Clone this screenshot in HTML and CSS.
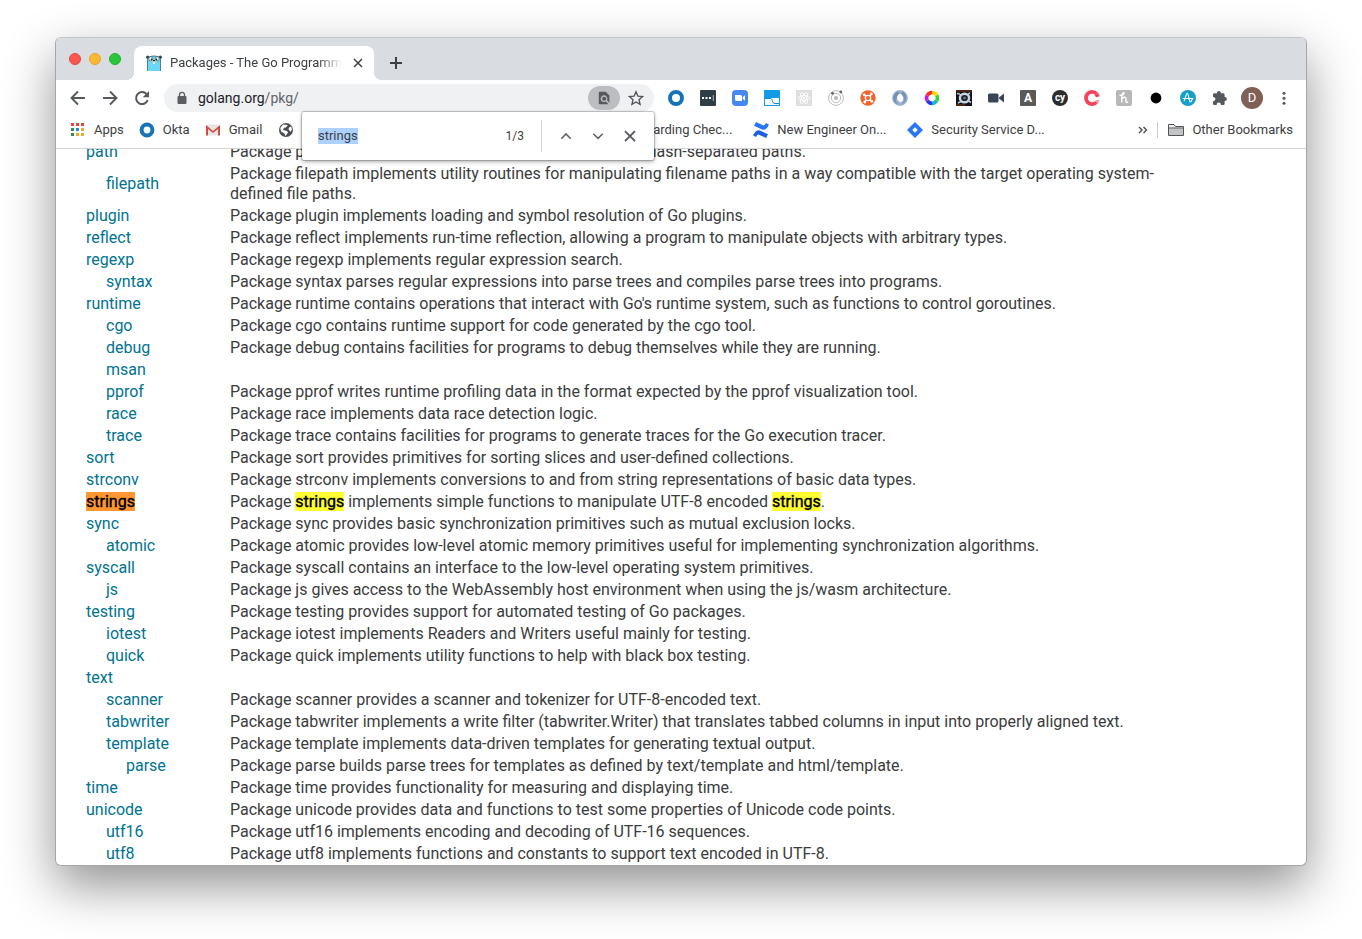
FILE: index.html
```html
<!DOCTYPE html>
<html lang="en">
<head>
<meta charset="utf-8">
<title>Packages - The Go Programming Language</title>
<link rel="stylesheet" href="styles.css">
</head>
<body>
<div class="window">
  <header class="tabstrip">
    <div class="lights">
      <button class="light light-close" aria-label="Close window"></button>
      <button class="light light-min" aria-label="Minimize window"></button>
      <button class="light light-max" aria-label="Zoom window"></button>
    </div>
    <div class="tab">
      <svg class="i16" viewBox="0 0 16 16"><circle cx="1.7" cy="2.2" r="1.6" fill="#27474f"/><circle cx="14.3" cy="2.2" r="1.6" fill="#27474f"/><path d="M1.5 16V4C2 0 14 0 14.500 4V16z" fill="#6ad7f7"/><path d="M1.500 16V4C2 0 14 0 14.500 4V16" fill="none" stroke="#23515f" stroke-width=".7"/><circle cx="4.800" cy="3.800" r="2" fill="#fff" stroke="#222" stroke-width=".5"/><circle cx="11.200" cy="3.800" r="2" fill="#fff" stroke="#222" stroke-width=".5"/><circle cx="5.500" cy="4.200" r=".8"/><circle cx="10.500" cy="4.200" r=".8"/><ellipse cx="8" cy="6.600" rx="2" ry="1.200" fill="#e9c9a0"/><ellipse cx="8" cy="5.600" rx="1.100" ry=".7"/><path d="M7.200 7.300h1.600v1.600H7.200z" fill="#fff"/></svg>
      <span class="tab-title">Packages - The Go Programming Language</span>
      <button class="icon-btn tab-close" aria-label="Close tab"><svg class="i16" viewBox="0 0 16 16"><path d="M4 4l8 8M12 4l-8 8" fill="none" stroke="#3c4043" stroke-width="1.500"/></svg></button>
    </div>
    <button class="icon-btn new-tab" aria-label="New tab"><svg class="i16" viewBox="0 0 16 16"><path d="M8 2v12M2 8h12" stroke="#3c4043" stroke-width="2"/></svg></button>
  </header>

  <nav class="toolbar">
    <div class="buttons">
      <button class="icon-btn" aria-label="Back"><svg class="i16" viewBox="0 0 16 16"><path d="M15 8H2M8 1.500L1.500 8 8 14.500" fill="none" stroke="#55585d" stroke-width="1.900"/></svg></button>
      <button class="icon-btn" aria-label="Forward"><svg class="i16" viewBox="0 0 16 16"><path d="M1 8h13M8 1.500L14.500 8 8 14.500" fill="none" stroke="#55585d" stroke-width="1.900"/></svg></button>
      <button class="icon-btn" aria-label="Reload"><svg class="i16" viewBox="0 0 16 16"><path d="M13.700 10.200A6 6 0 1 1 12.500 4" fill="none" stroke="#55585d" stroke-width="2"/><path d="M15 1v6.300H8.700z" fill="#55585d"/></svg></button>
    </div>
    <div class="omnibox">
      <svg class="i16 lock" viewBox="0 0 16 16"><rect x="3.500" y="6" width="9" height="8" rx="1" fill="#5a5d61"/><path d="M5.500 6.500V4.800a2.500 2.500 0 0 1 5 0v1.700" fill="none" stroke="#5a5d61" stroke-width="1.300"/></svg>
      <span class="url">golang.org<span class="url-path">/pkg/</span></span>
      <button class="icon-btn find-pill" aria-label="Find"><svg class="i16" viewBox="0 0 16 16"><path d="M3.600 1.800H9.600L13.400 5.400v7.300L11 10.300A3.400 3.400 0 1 0 9.800 11.600L12.600 14.300H3.900Q2.800 14.300 2.800 13.300V2.800Q2.800 1.800 3.600 1.800z" fill="#55585c"/><circle cx="8.200" cy="8.800" r="2" fill="#55585c"/></svg></button>
      <button class="icon-btn" aria-label="Bookmark"><svg class="i16" viewBox="0 0 16 16"><path d="M8 1.700l1.900 4.400 4.700.4-3.600 3.200 1.100 4.700L8 11.900l-4.100 2.500L5 9.700 1.400 6.500l4.700-.4z" fill="none" stroke="#505357" stroke-width="1.300"/></svg></button>
      <form class="findbar">
        <input class="find-input" type="text" value="strings" aria-label="Find in page">
        <span class="find-count">1/3</span>
        <span class="find-rule"></span>
        <button type="button" class="icon-btn" aria-label="Previous"><svg class="i16" viewBox="0 0 16 16"><path d="M3.300 10.700L8 6l4.700 4.700" fill="none" stroke="#5f6368" stroke-width="1.600"/></svg></button>
        <button type="button" class="icon-btn" aria-label="Next"><svg class="i16" viewBox="0 0 16 16"><path d="M3.300 5.700L8 10.400l4.700-4.700" fill="none" stroke="#5f6368" stroke-width="1.600"/></svg></button>
        <button type="button" class="icon-btn" aria-label="Close find bar"><svg class="i16" viewBox="0 0 16 16"><path d="M3 3.200l10 10M13 3.200l-10 10" fill="none" stroke="#55585d" stroke-width="1.900"/></svg></button>
      </form>
    </div>
    <div class="buttons">
      <button class="icon-btn" aria-label="Okta"><svg class="i16" viewBox="0 0 16 16"><circle cx="8" cy="8" r="6" fill="none" stroke="#1673b8" stroke-width="4"/></svg></button>
      <button class="icon-btn" aria-label="Password manager"><svg class="i16" viewBox="0 0 16 16"><rect width="16" height="16" rx="1" fill="#2f3d47"/><path d="M2 7h2v2H2zM5.500 7h2v2h-2zM9 7h2v2H9z" fill="#fff"/><path d="M12.800 5h1v6h-1z" fill="#aab1b5"/></svg></button>
      <button class="icon-btn" aria-label="Zoom"><svg class="i16" viewBox="0 0 16 16"><rect width="16" height="16" rx="4" fill="#4687f4"/><path d="M3 5h5.500q1.500 0 1.500 1.500V11H4.500Q3 11 3 9.500zM10.700 7.200L13 5.300v5.400l-2.300-1.900z" fill="#fff"/></svg></button>
      <button class="icon-btn" aria-label="Screenshots"><svg class="i16" viewBox="0 0 16 16"><path d="M0 0h16v16H0z" fill="#149be5"/><path d="M1 8h14v7H1z" fill="#f6fbfe"/><path d="M1 8.500h5.500C9 8.500 7.500 13.500 11 13.500h4" fill="none" stroke="#1688ca"/></svg></button>
      <button class="icon-btn" aria-label="React tools"><svg class="i16" viewBox="0 0 16 16"><rect width="16" height="16" fill="#dfdfdf"/><g fill="none" stroke="#fff" stroke-width=".9"><ellipse cx="8" cy="8" rx="6" ry="2.300"/><ellipse cx="8" cy="8" rx="6" ry="2.300" transform="rotate(60 8 8)"/><ellipse cx="8" cy="8" rx="6" ry="2.300" transform="rotate(120 8 8)"/></g><circle cx="8" cy="8" r="1" fill="#fff"/></svg></button>
      <button class="icon-btn" aria-label="Apollo tools"><svg class="i16" viewBox="0 0 16 16"><g fill="none" stroke="#b3b3b3" stroke-width=".9"><circle cx="8" cy="8" r="7.400"/><circle cx="8" cy="8" r="4.700"/></g><circle cx="8" cy="8" r="2.100" fill="#b8b8b8"/><circle cx="4.500" cy="3.300" r="1.400" fill="#666"/><circle cx="12.800" cy="2" r="1.400" fill="#666"/></svg></button>
      <button class="icon-btn" aria-label="Hub"><svg class="i16" viewBox="0 0 16 16"><circle cx="8" cy="8" r="7.700" fill="#f0642c"/><g fill="none" stroke="#fff" stroke-width="1.200"><circle cx="8" cy="8" r="2.700"/><path d="M4.300 4.500L6 6M11.500 4l-1.500 2M4.700 12L6 10M11.800 11.500L10 10"/></g><g fill="#fff"><circle cx="4.200" cy="4.800" r="1.400"/><circle cx="11.300" cy="4" r="1.400"/><circle cx="4.800" cy="12" r="1.400"/><circle cx="11.900" cy="11.300" r="1.400"/></g></svg></button>
      <button class="icon-btn" aria-label="JSON viewer"><svg class="i16" viewBox="0 0 16 16"><circle cx="8" cy="8" r="5.400" fill="none" stroke="#9db3d0" stroke-width="5"/><path d="M10.300 1.300C15 3 17 10.500 9.500 14.500c4.200-4.500 3.200-8-.5-10.500" fill="#7593ba"/><path d="M6 1.300C-.5 4-.5 13 6.500 14.800 2.500 10 4 6.500 8.500 3.800" fill="#7593ba"/><ellipse cx="8.300" cy="8" rx="2.500" ry="4.200" fill="#fff" transform="rotate(-10 8 8)"/></svg></button>
      <button class="icon-btn" aria-label="Color picker"><svg class="i16" viewBox="0 0 16 16"><g fill="none" stroke-width="3.600"><path d="M8 2.600A5.400 5.400 0 0 1 12.700 5.300" stroke="#ffd400"/><path d="M12.700 5.300A5.400 5.400 0 0 1 12.700 10.700" stroke="#35d32e"/><path d="M12.700 10.700A5.400 5.400 0 0 1 8 13.400" stroke="#16b9c9"/><path d="M8 13.400A5.400 5.400 0 0 1 3.300 10.700" stroke="#2738f0"/><path d="M3.300 10.700A5.400 5.400 0 0 1 3.300 5.300" stroke="#c51be2"/><path d="M3.300 5.300A5.400 5.400 0 0 1 8 2.600" stroke="#ff2c1f"/></g></svg></button>
      <button class="icon-btn" aria-label="Camera"><svg class="i16" viewBox="0 0 16 16"><path d="M0 0h16v16H0z" fill="#11131a"/><path d="M0 0h16v2H0zM0 14h9v2H0z" fill="#4c2516"/><path d="M1 3.500l3 .5M2 13l3-1.500M14 3l-2 1M15 12.500L12.500 11" stroke="#b8c5d3" stroke-width="1.500"/><ellipse cx="8.500" cy="8" rx="4.600" ry="4.300" fill="#1d2530" stroke="#c9d5e0" stroke-width="2.400"/><circle cx="8.500" cy="8" r="1.300" fill="#6d7f92"/></svg></button>
      <button class="icon-btn" aria-label="Video"><svg class="i16" viewBox="0 0 16 16"><rect y="3.500" width="10.500" height="9" rx="1.500" fill="#394456"/><path d="M11 7.500l5-4v9l-5-4z" fill="#394456"/></svg></button>
      <button class="icon-btn" aria-label="Accessibility"><span class="badge badge-a">A</span></button>
      <button class="icon-btn" aria-label="Cypress"><span class="badge badge-cy">cy</span></button>
      <button class="icon-btn" aria-label="Clockwise"><svg class="i16" viewBox="0 0 16 16"><path d="M12.500 3.800A6.100 6.100 0 1 0 12.500 12.200" fill="none" stroke="#f4425a" stroke-width="3.800"/><path d="M10.500 5.500L14 2.500l1.800 3.800-3.500 1z" fill="#f4425a"/><path d="M10.500 11.200l3-1.500h2l-1.500 3.500z" fill="#f7909f"/></svg></button>
      <button class="icon-btn" aria-label="Honey"><svg class="i16" viewBox="0 0 16 16"><rect width="16" height="16" rx="2" fill="#b8b8b8"/><path d="M3.500 5.200c3 0 5-1 4.600-2.100C7.500 1.900 5.800 4 5.800 7v5.500M5.800 9c1-2 4.200-2.600 4.200-.3v2.800c0 1.300 1.300 1.200 2 .3" fill="none" stroke="#fff" stroke-width="1.400"/></svg></button>
      <button class="icon-btn" aria-label="Recorder"><svg class="i16" viewBox="0 0 16 16"><circle cx="8" cy="8" r="5.400"/></svg></button>
      <button class="icon-btn" aria-label="Amplitude"><svg class="i16" viewBox="0 0 16 16"><circle cx="8" cy="8" r="8" fill="#159fc9"/><path d="M2.500 8.500h10.800M4 11C5.500 9 6 3.300 7.300 3.300S9 12 10.400 12s1.300-3 2.400-3.600" fill="none" stroke="#fff" stroke-width="1.100"/></svg></button>
      <button class="icon-btn" aria-label="Extensions"><svg class="i16" viewBox="0 0 16 16"><path d="M1 4.500q0-1.300 1.300-1.300H5C4.500.3 9.200.3 8.800 3.200h2.500q1.300 0 1.300 1.300V7c3-.3 3 4.300 0 4v2.700q0 1.300-1.300 1.300H9c0-3.300-4.400-3.300-4.400 0H2.300Q1 15 1 13.700v-2.500c3.200 0 3.200-4.200 0-4.200z" fill="#55585d"/></svg></button>
      <button class="icon-btn" aria-label="Profile"><span class="avatar">D</span></button>
      <button class="icon-btn" aria-label="Menu"><svg class="i16" viewBox="0 0 16 16"><g fill="#55585d"><circle cx="8" cy="3.200" r="1.500"/><circle cx="8" cy="8.200" r="1.500"/><circle cx="8" cy="13.200" r="1.500"/></g></svg></button>
    </div>
  </nav>

  <nav class="bookmarks">
    <a class="bookmark" href="#"><svg class="i16" viewBox="0 0 16 16"><path d="M1 1h3v3H1zM6 1h3v3H6zM11 1h3v3h-3z" fill="#e9453a"/><path d="M1 6h3v3H1zM1 11h3v3H1z" fill="#2f9150"/><path d="M6 6h3v3H6z" fill="#3080ee"/><path d="M11 6h3v3h-3zM6 11h3v3H6zM11 11h3v3h-3z" fill="#f2a62a"/></svg>Apps</a>
    <a class="bookmark" href="#"><svg class="i16" viewBox="0 0 16 16"><circle cx="8" cy="8" r="5.400" fill="none" stroke="#1673b8" stroke-width="4"/></svg>Okta</a>
    <a class="bookmark" href="#"><svg class="i16" viewBox="0 0 16 16"><path d="M2 2.500h12v11H2z" fill="#e6e6e6"/><path d="M1 3l7 6 7-6v10.500h-2V7L8 11 3 7v6.500H1z" fill="#d54b3d"/></svg>Gmail</a>
    <a class="bookmark bookmark-covered" href="#" aria-label="Website"><svg class="i16" viewBox="0 0 16 16"><circle cx="9" cy="8" r="7" fill="#4b4e53"/><path d="M6 2.500l4.800.5L9 5.500l-2 .2L6 8l4 1 1 1.500L8.500 14l-1-2.500L4 9.500 3.300 6zM11.500 6l2.700-1.700.8 3.200-1.500 2.200L12 8.200z" fill="#fff"/></svg></a>
    <a class="bookmark" href="#"><span class="i16"></span><span class="clip clip-end">Onboarding Chec...</span></a>
    <a class="bookmark" href="#"><svg class="i16" viewBox="0 0 16 16"><path d="M.5 12.500Q3.500 7 7 8.500l8 3.800-2 3.700-7-3.300q-1.500-.7-3 2.300L0 13.300z" fill="#1d61dc"/><path d="M15.500 3.500Q12.500 9 9 7.500L1 3.700 3 0l7 3.300q1.500.7 3-2.300L16 2.700z" fill="#2874f6"/></svg><span class="clip">New Engineer On...</span></a>
    <a class="bookmark" href="#"><svg class="i16" viewBox="0 0 16 16"><path d="M8 0l8 8-8 8-8-8z" fill="#2876f7"/><path d="M8 5.300L10.700 8 8 10.700 5.300 8z" fill="#fff"/></svg><span class="clip">Security Service D...</span></a>
    <div class="bookmarks-end">
      <button class="more" aria-label="More bookmarks"><svg class="i16" viewBox="0 0 16 16"><path d="M4 5l3 3-3 3M8.500 5l3 3-3 3" fill="none" stroke="#4b4e53" stroke-width="1.400"/></svg></button>
      <span class="bookmarks-rule"></span>
      <a class="bookmark" href="#"><svg class="i16" viewBox="0 0 16 16"><path d="M.5 13.500V2.500H6L7.500 4.500h8v9z" fill="#eee" stroke="#505357"/><path d="M1 6.500h14V13H1z" fill="#c4c4c4"/><path d="M1 6h14.500" stroke="#505357"/></svg>Other Bookmarks</a>
    </div>
  </nav>

  <main class="page">
    <table class="packages">
      <tbody>
      <tr><td><a href="#">path</a></td><td>Package path implements utility routines for manipulating slash-separated paths.</td></tr>
      <tr><td class="sub"><a href="#">filepath</a></td><td>Package filepath implements utility routines for manipulating filename paths in a way compatible with the target operating system-defined file paths.</td></tr>
      <tr><td><a href="#">plugin</a></td><td>Package plugin implements loading and symbol resolution of Go plugins.</td></tr>
      <tr><td><a href="#">reflect</a></td><td>Package reflect implements run-time reflection, allowing a program to manipulate objects with arbitrary types.</td></tr>
      <tr><td><a href="#">regexp</a></td><td>Package regexp implements regular expression search.</td></tr>
      <tr><td class="sub"><a href="#">syntax</a></td><td>Package syntax parses regular expressions into parse trees and compiles parse trees into programs.</td></tr>
      <tr><td><a href="#">runtime</a></td><td>Package runtime contains operations that interact with Go's runtime system, such as functions to control goroutines.</td></tr>
      <tr><td class="sub"><a href="#">cgo</a></td><td>Package cgo contains runtime support for code generated by the cgo tool.</td></tr>
      <tr><td class="sub"><a href="#">debug</a></td><td>Package debug contains facilities for programs to debug themselves while they are running.</td></tr>
      <tr><td class="sub"><a href="#">msan</a></td><td></td></tr>
      <tr><td class="sub"><a href="#">pprof</a></td><td>Package pprof writes runtime profiling data in the format expected by the pprof visualization tool.</td></tr>
      <tr><td class="sub"><a href="#">race</a></td><td>Package race implements data race detection logic.</td></tr>
      <tr><td class="sub"><a href="#">trace</a></td><td>Package trace contains facilities for programs to generate traces for the Go execution tracer.</td></tr>
      <tr><td><a href="#">sort</a></td><td>Package sort provides primitives for sorting slices and user-defined collections.</td></tr>
      <tr><td><a href="#">strconv</a></td><td>Package strconv implements conversions to and from string representations of basic data types.</td></tr>
      <tr><td><a href="#"><mark class="current">strings</mark></a></td><td>Package <mark>strings</mark> implements simple functions to manipulate UTF-8 encoded <mark>strings</mark>.</td></tr>
      <tr><td><a href="#">sync</a></td><td>Package sync provides basic synchronization primitives such as mutual exclusion locks.</td></tr>
      <tr><td class="sub"><a href="#">atomic</a></td><td>Package atomic provides low-level atomic memory primitives useful for implementing synchronization algorithms.</td></tr>
      <tr><td><a href="#">syscall</a></td><td>Package syscall contains an interface to the low-level operating system primitives.</td></tr>
      <tr><td class="sub"><a href="#">js</a></td><td>Package js gives access to the WebAssembly host environment when using the js/wasm architecture.</td></tr>
      <tr><td><a href="#">testing</a></td><td>Package testing provides support for automated testing of Go packages.</td></tr>
      <tr><td class="sub"><a href="#">iotest</a></td><td>Package iotest implements Readers and Writers useful mainly for testing.</td></tr>
      <tr><td class="sub"><a href="#">quick</a></td><td>Package quick implements utility functions to help with black box testing.</td></tr>
      <tr><td><a href="#">text</a></td><td></td></tr>
      <tr><td class="sub"><a href="#">scanner</a></td><td>Package scanner provides a scanner and tokenizer for UTF-8-encoded text.</td></tr>
      <tr><td class="sub"><a href="#">tabwriter</a></td><td>Package tabwriter implements a write filter (tabwriter.Writer) that translates tabbed columns in input into properly aligned text.</td></tr>
      <tr><td class="sub"><a href="#">template</a></td><td>Package template implements data-driven templates for generating textual output.</td></tr>
      <tr><td class="subsub"><a href="#">parse</a></td><td>Package parse builds parse trees for templates as defined by text/template and html/template.</td></tr>
      <tr><td><a href="#">time</a></td><td>Package time provides functionality for measuring and displaying time.</td></tr>
      <tr><td><a href="#">unicode</a></td><td>Package unicode provides data and functions to test some properties of Unicode code points.</td></tr>
      <tr><td class="sub"><a href="#">utf16</a></td><td>Package utf16 implements encoding and decoding of UTF-16 sequences.</td></tr>
      <tr><td class="sub"><a href="#">utf8</a></td><td>Package utf8 implements functions and constants to support text encoded in UTF-8.</td></tr>
      </tbody>
    </table>
  </main>
</div>
<script src="script.js"></script>
</body>
</html>
```
FILE: styles.css
```css
* { box-sizing: border-box; }
body {
  margin: 0;
  height: 100vh;
  padding: 37px 55px 73px;
  display: flex;
  overflow: hidden;
  background: #fff;
  font: 13px/16px Roboto, "Liberation Sans", sans-serif;
  color: #3c4043;
}
button { padding: 0; border: 0; background: none; font: inherit; color: inherit; }
a { color: inherit; text-decoration: none; }
.i16 { display: block; flex: none; width: 16px; height: 16px; }

.window {
  flex: 1;
  min-width: 0;
  display: flex;
  flex-direction: column;
  border: 1px solid #a4a7a9;
  border-top-color: #c3c6c9;
  border-radius: 6px;
  background: #fff;
  box-shadow: 0 20px 50px rgba(0, 0, 0, .43);
}

.tabstrip {
  flex: none;
  height: 42px;
  display: flex;
  align-items: flex-end;
  background: #d9dce1;
  border-radius: 5px 5px 0 0;
}
.lights { display: flex; gap: 8px; padding: 0 13px 15px; }
.light { width: 12px; height: 12px; border-radius: 50%; }
.light-close { background: #fc5650; border: 1px solid #e5443f; }
.light-min { background: #fdb92e; border: 1px solid #e4a32a; }
.light-max { background: #2bc53c; border: 1px solid #23ad31; }
.tab {
  position: relative;
  width: 240px;
  height: 34px;
  display: flex;
  align-items: center;
  gap: 8px;
  padding: 0 8px 0 12px;
  background: #fff;
  border-radius: 8px 8px 0 0;
}
.tab::before, .tab::after {
  content: "";
  position: absolute;
  bottom: 0;
  width: 8px;
  height: 8px;
}
.tab::before { left: -8px; background: radial-gradient(circle at 0 0, transparent 8px, #fff 8px); }
.tab::after { right: -8px; background: radial-gradient(circle at 100% 0, transparent 8px, #fff 8px); }
.tab-title {
  flex: 1;
  overflow: hidden;
  white-space: nowrap;
  mask-image: linear-gradient(to right, #000 calc(100% - 24px), transparent);
}
.tab .tab-close { width: 16px; }
.new-tab { height: 34px; margin-left: 6px; }

.icon-btn { flex: none; width: 32px; display: flex; align-items: center; justify-content: center; }

.toolbar { flex: none; height: 36px; display: flex; align-items: center; gap: 6px; padding: 0 6px; }
.buttons { flex: none; display: flex; align-items: center; }
.omnibox {
  position: relative;
  flex: 1;
  min-width: 0;
  height: 28px;
  display: flex;
  align-items: center;
  padding: 0 2px 0 10px;
  border-radius: 14px;
  background: #eff1f3;
}
.url { flex: 1; padding-left: 8px; font-size: 14px; color: #202124; }
.url-path { color: #5f6368; }
.find-pill { height: 24px; border-radius: 12px; background: #bcbdc0; }
.badge {
  width: 16px;
  height: 16px;
  color: #fff;
  font-weight: 700;
  font-size: 12px;
  line-height: 16px;
  text-align: center;
}
.badge-a { background: #595959; border-radius: 1px; }
.badge-cy { background: #2c2d2f; border-radius: 50%; font-size: 10px; line-height: 15px; }
.avatar { width: 22px; height: 22px; border-radius: 50%; background: #805f55; color: #fff; line-height: 22px; text-align: center; }

.findbar {
  position: absolute;
  z-index: 2;
  top: 28px;
  right: 0;
  width: 352px;
  height: 48px;
  display: flex;
  align-items: center;
  padding: 0 8px 0 16px;
  background: #fff;
  border-radius: 2px;
  box-shadow: 0 0 1px 1px rgba(0, 0, 0, .22), 0 2px 4px rgba(0, 0, 0, .3);
}
.find-input {
  flex: 1;
  min-width: 0;
  padding: 0;
  border: 0;
  outline: 0;
  background: none;
  font: inherit;
  color: #3c4043;
}
.find-input::selection { background: #acd1fe; color: #3c4043; }
.find-count { font-size: 12px; }
.find-rule { width: 1px; height: 32px; margin: 0 8px 0 17px; background: #d5d7da; }

.bookmarks {
  flex: none;
  height: 33px;
  display: flex;
  align-items: center;
  gap: 15px;
  padding: 0 13px 5px 14px;
  border-bottom: 1px solid #d3d5d8;
}
.bookmark { flex: none; display: flex; align-items: center; gap: 8px; white-space: nowrap; }
.bookmark-covered { width: 307px; }
.clip { width: 115px; }
.clip-end { padding-right: 6px; display: flex; justify-content: flex-end; }
.bookmarks-end { display: flex; align-items: center; gap: 6px; margin-left: auto; }
.bookmarks-rule { width: 1px; height: 16px; margin-right: 4px; background: #c9cbce; }

.page {
  flex: 1;
  min-height: 0;
  display: flex;
  flex-direction: column;
  justify-content: flex-end;
  overflow: hidden;
  padding: 0 120px 0 30px;
  border-radius: 0 0 5px 5px;
  font-size: 16px;
  line-height: 20px;
  color: #3a3c3e;
}
.packages { width: 100%; border-collapse: collapse; }
.packages td { height: 22px; padding: 1px 0; vertical-align: middle; }
.packages td:first-child { width: 144px; color: #007391; }
.packages .sub { padding-left: 20px; }
.packages .subsub { padding-left: 40px; }
mark { background: #ffff32; color: #000; -webkit-text-stroke: 0.4px #000; }
mark.current { background: #ff9632; }
```
FILE: script.js
```js
const findInput = document.querySelector(".find-input");
findInput.focus({ preventScroll: true });
findInput.select();
```
